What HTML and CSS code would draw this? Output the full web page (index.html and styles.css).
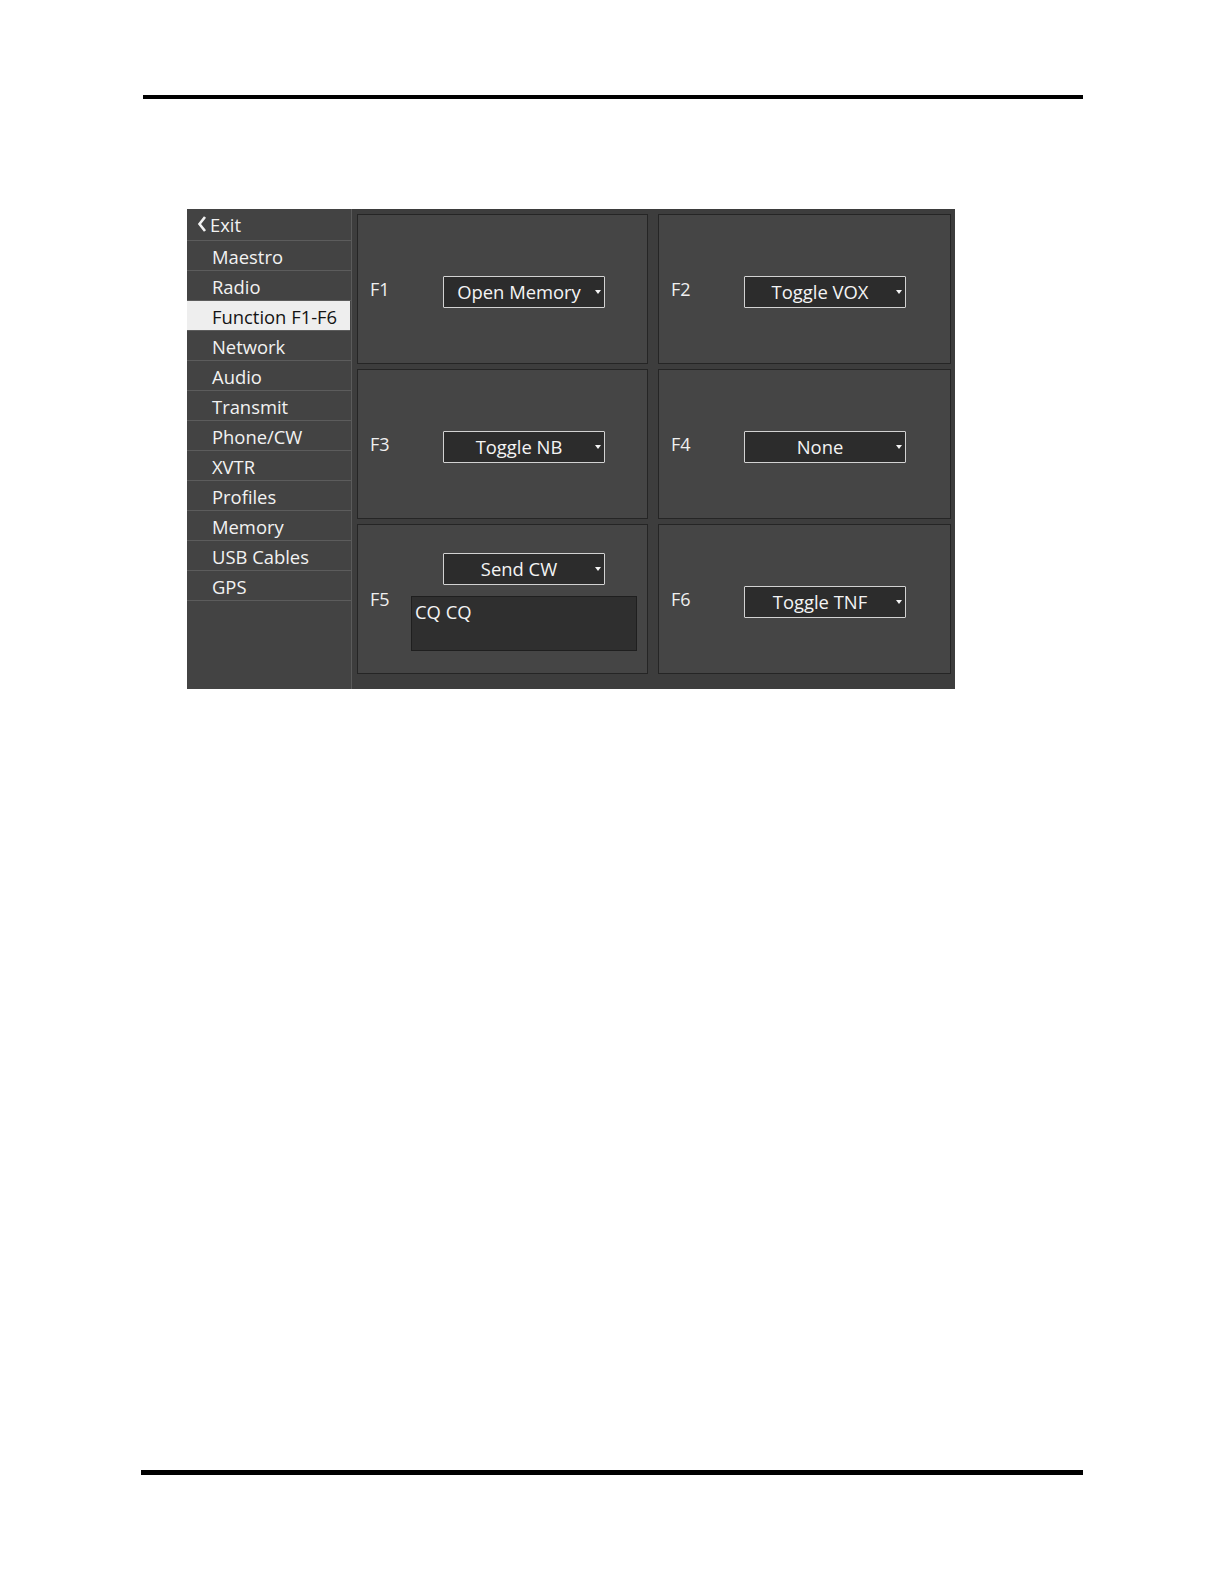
FILE: index.html
```html
<!DOCTYPE html>
<html>
<head>
<meta charset="utf-8">
<link rel="stylesheet" href="styles.css">
</head>
<body>
<div class="page">
  <div class="rule rule-top"></div>
  <div class="panel">
    <nav class="sidebar">
      <div class="nav-item exit">
        <svg class="chev" width="10" height="18" viewBox="0 0 10 18"><path d="M8 2 L2.5 9 L8 16" fill="none" stroke="#f2f2f2" stroke-width="2.6"/></svg>
        <span>Exit</span>
      </div>
      <div class="nav-item">Maestro</div>
      <div class="nav-item">Radio</div>
      <div class="nav-item active">Function F1-F6</div>
      <div class="nav-item">Network</div>
      <div class="nav-item">Audio</div>
      <div class="nav-item">Transmit</div>
      <div class="nav-item">Phone/CW</div>
      <div class="nav-item">XVTR</div>
      <div class="nav-item">Profiles</div>
      <div class="nav-item">Memory</div>
      <div class="nav-item">USB Cables</div>
      <div class="nav-item">GPS</div>
    </nav>
    <main class="content">
      <div class="cell">
        <span class="flabel">F1</span>
        <div class="select"><span>Open Memory</span><i class="arrow"></i></div>
      </div>
      <div class="cell">
        <span class="flabel">F2</span>
        <div class="select"><span>Toggle VOX</span><i class="arrow"></i></div>
      </div>
      <div class="cell">
        <span class="flabel">F3</span>
        <div class="select"><span>Toggle NB</span><i class="arrow"></i></div>
      </div>
      <div class="cell">
        <span class="flabel">F4</span>
        <div class="select"><span>None</span><i class="arrow"></i></div>
      </div>
      <div class="cell">
        <span class="flabel short">F5</span>
        <div class="stack">
          <div class="select offset"><span>Send CW</span><i class="arrow"></i></div>
          <div class="textbox">CQ CQ</div>
        </div>
      </div>
      <div class="cell">
        <span class="flabel">F6</span>
        <div class="select"><span>Toggle TNF</span><i class="arrow"></i></div>
      </div>
    </main>
  </div>
  <div class="rule rule-bottom"></div>
</div>
</body>
</html>
```

FILE: styles.css
```css
html, body {
  margin: 0;
  padding: 0;
  background: #ffffff;
}

body {
  font-family: "Open Sans", "Noto Sans", "Liberation Sans", sans-serif;
  width: 1224px;
  height: 1584px;
}

.page {
  display: flex;
  flex-direction: column;
  align-items: flex-start;
  padding-top: 95px;
}

.rule {
  background: #000000;
}

.rule-top {
  width: 940px;
  height: 4px;
  margin-left: 143px;
}

.rule-bottom {
  width: 942px;
  height: 5px;
  margin-left: 141px;
  margin-top: 781px;
}

.panel {
  margin-top: 110px;
  margin-left: 187px;
  width: 768px;
  height: 480px;
  display: flex;
  background: #3f3f3f;
}

.sidebar {
  width: 164px;
  border-right: 1px solid #5b5b5b;
  background: #434343;
  display: flex;
  flex-direction: column;
}

.nav-item {
  height: 28px;
  padding-top: 1px;
  border-bottom: 1px solid #5c5c5c;
  color: #f2f2f2;
  font-size: 18.4px;
  line-height: 29px;
  padding-left: 25px;
  white-space: nowrap;
}

.nav-item.exit {
  display: flex;
  align-items: center;
  padding-left: 10px;
  padding-top: 0;
  gap: 3px;
  height: 31px;
}

.nav-item.exit span {
  line-height: 29px;
}

.chev {
  display: block;
  margin-top: -1px;
}

.nav-item.active {
  background: #eeeeee;
  color: #141414;
  margin-right: 1px;
}

.content {
  flex: 1;
  display: grid;
  grid-template-columns: 291px 293px;
  grid-template-rows: repeat(3, 150px);
  column-gap: 10px;
  row-gap: 5px;
  padding: 5px 0 0 5px;
  background: #3d3d3d;
}

.cell {
  box-sizing: border-box;
  border: 1px solid #252525;
  background: #454545;
  display: flex;
  align-items: center;
  padding-left: 12px;
  padding-top: 5px;
}

.flabel {
  color: #f0f0f0;
  font-size: 18px;
  width: 73px;
  flex: none;
  margin-top: -5px;
}

.flabel.short {
  width: 41px;
}

.select {
  box-sizing: border-box;
  width: 162px;
  height: 32px;
  border: 1px solid #d2d2d2;
  border-radius: 1px;
  background: #2c2c2c;
  color: #f4f4f4;
  font-size: 18.4px;
  display: flex;
  align-items: center;
  position: relative;
  padding-right: 10px;
}

.select span {
  flex: 1;
  text-align: center;
  line-height: 30px;
}

.select .arrow {
  position: absolute;
  right: 3px;
  top: 13px;
  width: 0;
  height: 0;
  border-left: 3px solid transparent;
  border-right: 3px solid transparent;
  border-top: 4px solid #f4f4f4;
}

.stack {
  display: flex;
  flex-direction: column;
  margin-top: 0;
}

.select.offset {
  margin-left: 32px;
}

.textbox {
  box-sizing: border-box;
  margin-top: 11px;
  width: 226px;
  height: 55px;
  background: #2f2f2f;
  border: 1px solid #1f1f1f;
  color: #f4f4f4;
  font-size: 18.4px;
  line-height: 24px;
  padding: 3px 3px 0;
}
```
